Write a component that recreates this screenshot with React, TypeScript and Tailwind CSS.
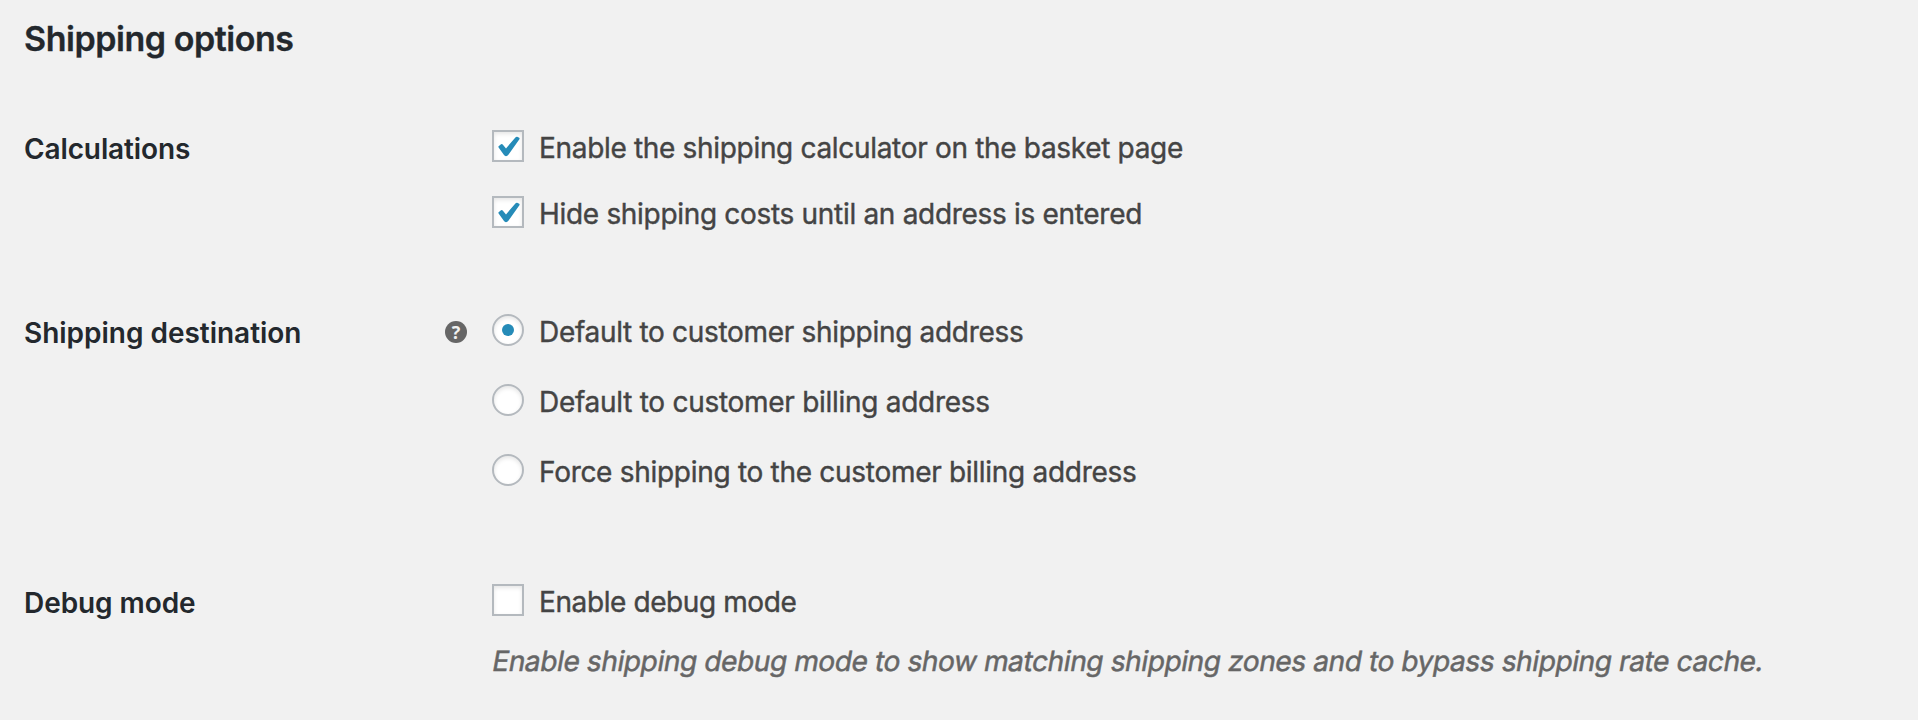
import React from 'react';

interface OptionProps {
  type: 'checkbox' | 'radio';
  label: string;
  checked?: boolean;
  textClass?: string;
}

const Option: React.FC<OptionProps> = ({ type, label, checked = false, textClass = '' }) => {
  return (
    <label className="flex h-9 items-start gap-[15px]">
      <span
        className={`flex h-8 w-8 shrink-0 items-center justify-center border-2 border-[#b4b9be] bg-white shadow-[inset_0_2px_4px_rgba(0,0,0,0.1)] ${
          type === 'radio' ? 'rounded-full' : ''
        }`}
      >
        {checked && type === 'radio' && <span className="h-3 w-3 rounded-full bg-[#258bb8]" />}
        {checked && type === 'checkbox' && (
          <svg width="28" height="28" viewBox="0 0 28 28" fill="#258bb8">
            <path d="M4.6 14.2 L7 12.3 Q7.9 11.7 8.7 12.5 L12 16.4 L21.6 5.2 Q22.3 4.5 23.2 4.8 L25.2 5.8 Q25.9 6.4 25.4 7.2 L14.4 22.8 Q13.4 24.2 12 24.2 Q10.7 24.1 10 23.1 L4.6 15.6 Q4.1 14.8 4.6 14.2 Z" />
          </svg>
        )}
      </span>
      <span
        className={`text-[28px] leading-9 whitespace-nowrap text-[#444] [-webkit-text-stroke:0.4px_#444] ${textClass}`}
      >
        {label}
      </span>
    </label>
  );
};

interface SettingRowProps {
  title: string;
  titleClass?: string;
  help?: boolean;
  className?: string;
  children: React.ReactNode;
}

const SettingRow: React.FC<SettingRowProps> = ({ title, titleClass = '', help = false, className = '', children }) => {
  return (
    <div className={`flex items-start ${className}`}>
      <div className="flex w-[468px] shrink-0 items-start justify-between pr-[25px]">
        <h3 className={`pt-px text-[28px] leading-9 font-semibold whitespace-nowrap text-[#23282d] ${titleClass}`}>
          {title}
        </h3>
        {help && (
          <span className="mt-[7px] flex h-[22px] w-[22px] items-center justify-center rounded-full bg-[#666] font-['Open_Sans',sans-serif] text-[18px] leading-none font-bold text-[#f1f1f1]">
            ?
          </span>
        )}
      </div>
      <div className="flex flex-col">{children}</div>
    </div>
  );
};

export default function App() {
  return (
    <div className="h-[720px] w-full overflow-hidden bg-[#f1f1f1] pt-[17px] pl-6 font-['Inter',sans-serif]">
      <h2 className="text-[34px] leading-[44px] font-semibold tracking-[-0.45px] text-[#23282d] [-webkit-text-stroke:0.3px_#23282d]">
        Shipping options
      </h2>

      <SettingRow title="Calculations" titleClass="tracking-[-0.12px]" className="mt-[69px]">
        <div className="flex flex-col gap-[30px]">
          <Option type="checkbox" checked label="Enable the shipping calculator on the basket page" textClass="tracking-[-0.32px]" />
          <Option type="checkbox" checked label="Hide shipping costs until an address is entered" textClass="tracking-[-0.31px]" />
        </div>
      </SettingRow>

      <SettingRow title="Shipping destination" titleClass="tracking-[-0.02px]" help className="mt-[82px]">
        <div className="flex flex-col gap-[34px]">
          <Option type="radio" checked label="Default to customer shipping address" textClass="tracking-[-0.31px]" />
          <Option type="radio" label="Default to customer billing address" textClass="tracking-[-0.28px]" />
          <Option type="radio" label="Force shipping to the customer billing address" textClass="tracking-[-0.29px]" />
        </div>
      </SettingRow>

      <SettingRow title="Debug mode" titleClass="tracking-[-0.07px]" className="mt-[94px]">
        <Option type="checkbox" label="Enable debug mode" textClass="tracking-[-0.4px]" />
        {/* slanted roman, keeps the two-storey "a" */}
        <p className="mt-[23px] -ml-px origin-[0_28px] -skew-x-[10deg] text-[28px] leading-9 tracking-[-0.375px] whitespace-nowrap text-[#666] [-webkit-text-stroke:0.5px_#666]">
          Enable shipping debug mode to show matching shipping zones and to bypass shipping rate cache.
        </p>
      </SettingRow>
    </div>
  );
}
